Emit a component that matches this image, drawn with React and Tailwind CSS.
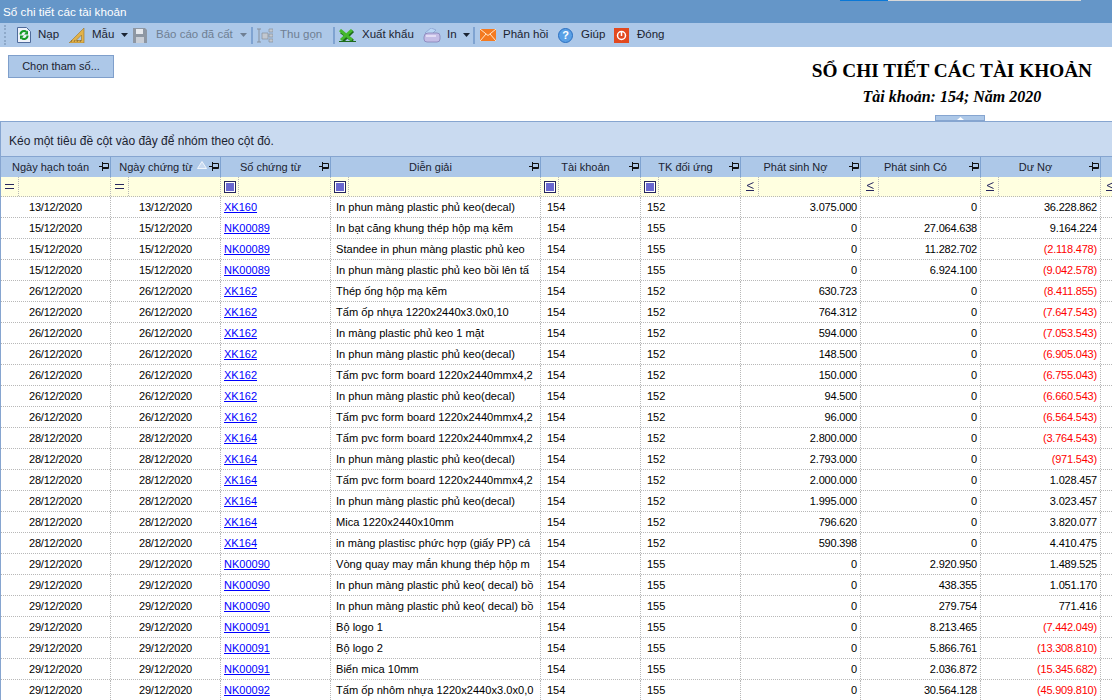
import React from "react";

const F = "font-['Liberation_Sans',Arial,sans-serif]";

const rows = [
  ["13/12/2020", "13/12/2020", "XK160", "In phun màng plastic phủ keo(decal)", "152", "3.075.000", "0", "36.228.862"],
  ["15/12/2020", "15/12/2020", "NK00089", "In bạt căng khung thép hộp mạ kẽm", "155", "0", "27.064.638", "9.164.224"],
  ["15/12/2020", "15/12/2020", "NK00089", "Standee in phun màng plastic phủ keo", "155", "0", "11.282.702", "(2.118.478)"],
  ["15/12/2020", "15/12/2020", "NK00089", "In phun màng plastic phủ keo bồi lên tấ", "155", "0", "6.924.100", "(9.042.578)"],
  ["26/12/2020", "26/12/2020", "XK162", "Thép ống hộp mạ kẽm", "152", "630.723", "0", "(8.411.855)"],
  ["26/12/2020", "26/12/2020", "XK162", "Tấm ốp nhựa 1220x2440x3.0x0,10", "152", "764.312", "0", "(7.647.543)"],
  ["26/12/2020", "26/12/2020", "XK162", "In màng plastic phủ keo 1 mặt", "152", "594.000", "0", "(7.053.543)"],
  ["26/12/2020", "26/12/2020", "XK162", "In phun màng plastic phủ keo(decal)", "152", "148.500", "0", "(6.905.043)"],
  ["26/12/2020", "26/12/2020", "XK162", "Tấm pvc form board 1220x2440mmx4,2", "152", "150.000", "0", "(6.755.043)"],
  ["26/12/2020", "26/12/2020", "XK162", "In phun màng plastic phủ keo(decal)", "152", "94.500", "0", "(6.660.543)"],
  ["26/12/2020", "26/12/2020", "XK162", "Tấm pvc form board 1220x2440mmx4,2", "152", "96.000", "0", "(6.564.543)"],
  ["28/12/2020", "28/12/2020", "XK164", "Tấm pvc form board 1220x2440mmx4,2", "152", "2.800.000", "0", "(3.764.543)"],
  ["28/12/2020", "28/12/2020", "XK164", "In phun màng plastic phủ keo(decal)", "152", "2.793.000", "0", "(971.543)"],
  ["28/12/2020", "28/12/2020", "XK164", "Tấm pvc form board 1220x2440mmx4,2", "152", "2.000.000", "0", "1.028.457"],
  ["28/12/2020", "28/12/2020", "XK164", "In phun màng plastic phủ keo(decal)", "152", "1.995.000", "0", "3.023.457"],
  ["28/12/2020", "28/12/2020", "XK164", "Mica 1220x2440x10mm", "152", "796.620", "0", "3.820.077"],
  ["28/12/2020", "28/12/2020", "XK164", "in màng plastisc phức hợp (giấy PP) cá", "152", "590.398", "0", "4.410.475"],
  ["29/12/2020", "29/12/2020", "NK00090", "Vòng quay may mắn khung thép hộp m", "155", "0", "2.920.950", "1.489.525"],
  ["29/12/2020", "29/12/2020", "NK00090", "In phun màng plastic phủ keo( decal) bồ", "155", "0", "438.355", "1.051.170"],
  ["29/12/2020", "29/12/2020", "NK00090", "In phun màng plastic phủ keo( decal) bồ", "155", "0", "279.754", "771.416"],
  ["29/12/2020", "29/12/2020", "NK00091", "Bộ logo 1", "155", "0", "8.213.465", "(7.442.049)"],
  ["29/12/2020", "29/12/2020", "NK00091", "Bộ logo 2", "155", "0", "5.866.761", "(13.308.810)"],
  ["29/12/2020", "29/12/2020", "NK00091", "Biển mica 10mm", "155", "0", "2.036.872", "(15.345.682)"],
  ["29/12/2020", "29/12/2020", "NK00092", "Tấm ốp nhôm nhựa 1220x2440x3.0x0,0", "155", "0", "30.564.128", "(45.909.810)"],
];

const Caret = ({ muted }) => (
  <svg width="7" height="4" viewBox="0 0 7 4" className="shrink-0">
    <path d="M0 0h7L3.500 4z" fill={muted ? "#6f7f93" : "#1a2433"} />
  </svg>
);

const Sep = () => <div className="h-[17px] w-[2px] shrink-0 bg-[#7fa3d1]" />;

const PinIcon = () => (
  <svg width="11" height="9" viewBox="0 0 11 9" className="shrink-0">
    <path d="M0 4.500h3M3.500 0v9M3.500 1.500h6v5h-6" fill="none" stroke="#111" strokeWidth="1" />
    <path d="M4 5.500h6" stroke="#111" strokeWidth="1" />
  </svg>
);

const Header = ({ w, title, extra, pad = "pr-[10px]" }) => (
  <div className={`relative flex h-full shrink-0 items-center justify-center border-r border-[#7fa3d1] ${w} ${pad}`}>
    <span className="text-[11px] text-[#1b2330]">{title}</span>
    {extra}
    <span className="absolute right-[0px] top-[5px]"><PinIcon /></span>
  </div>
);

const FilterSquare = () => (
  <div className="flex h-[12px] w-[12px] items-center justify-center border border-[#26265e] bg-white">
    <div className="h-[8px] w-[8px] bg-[#6a67cf]" />
  </div>
);

const FilterEq = () => (
  <svg width="9" height="5" viewBox="0 0 9 5"><path d="M0 .5h9M0 4.500h9" stroke="#26265e" strokeWidth="1" /></svg>
);

const FilterLe = () => (
  <svg width="8" height="9" viewBox="0 0 8 9"><path d="M7.500 .5L1 3.500l6.500 3M0 8.500h8" fill="none" stroke="#26265e" strokeWidth="1" /></svg>
);

const Filter = ({ w, icon }) => (
  <div className={`flex h-full shrink-0 border-r border-dotted border-[#b8b8b8] ${w}`}>
    <div className="flex h-full w-[18px] shrink-0 items-center justify-center border-r border-dotted border-[#b8b8b8]">{icon}</div>
  </div>
);

const Cell = ({ w, className = "", children }) => (
  <div className={`flex h-full shrink-0 items-center overflow-hidden whitespace-nowrap border-r border-dotted border-[#b8b8b8] pt-[1px] ${w} ${className}`}>
    {children}
  </div>
);

export default function App() {
  return (
    <div className={`relative flex h-[700px] w-[1112px] flex-col overflow-hidden bg-white text-[12px] text-black ${F}`}>
      {/* window bar */}
      <div className="relative flex h-[23px] shrink-0 items-center bg-[#6596c8] pl-[3px] text-[11.700px] text-white">
        Sổ chi tiết các tài khoản
        <div className="absolute left-[840px] top-0 flex h-[1px]">
          <div className="w-[48px] bg-[#0a78d7]" />
          <div className="w-[193px] bg-[#d8d8d8]" />
        </div>
      </div>

      {/* toolbar */}
      <div className="flex h-[24px] shrink-0 items-center whitespace-nowrap bg-[#adc8e8] text-[11.500px] text-[#1b2330]">
        <div className="ml-[4px] h-[20px] w-[3px] border-l-2 border-dotted border-[#8ea9c9]" />
        <svg width="14" height="16" viewBox="0 0 14 16" className="ml-[10px] shrink-0">
          <path d="M.5.5h9l4 4v11H.5z" fill="#eef2fa" stroke="#4f6a9a" />
          <path d="M3.500 7.500a3.500 3.500 0 0 1 6-2.500" fill="none" stroke="#159a24" strokeWidth="2" />
          <path d="M10.500 8.500a3.500 3.500 0 0 1-6 2.500" fill="none" stroke="#159a24" strokeWidth="2" />
          <path d="M11 3.500V7.500H7zM3 12.500V8.500h4z" fill="#159a24" />
        </svg>
        <span className="ml-[7px] w-[22px]">Nạp</span>
        <svg width="16" height="15" viewBox="0 0 16 15" className="ml-[9px] shrink-0">
          <path d="M15 0v15H0zM12.500 7L7 12.500h5.500z" fill="#e2b24a" fillRule="evenodd" stroke="#9b7426" strokeWidth=".6" />
          <path d="M2 14l1-2M5 14l1-2M8 14l1-2M11 14l1-2" stroke="#7a5a18" strokeWidth=".7" />
        </svg>
        <span className="ml-[7px] w-[23px]">Mẫu</span>
        <span className="ml-[6px]"><Caret /></span>
        <svg width="14" height="15" viewBox="0 0 14 15" className="ml-[5px] shrink-0">
          <path d="M0 0h12l2 2v13H0z" fill="#8e97a3" />
          <path d="M3 1h7v5H3z" fill="#e6e9ee" />
          <path d="M3 9h8v6H3z" fill="#c9ced6" />
        </svg>
        <span className="ml-[9px] w-[77px] text-[#6f7f93]">Báo cáo đã cất</span>
        <span className="ml-[7px]"><Caret muted /></span>
        <div className="ml-[4px]"><Sep /></div>
        <svg width="16" height="15" viewBox="0 0 16 15" className="ml-[4px] shrink-0">
          <path d="M0 1h4M2 1v13M0 14h4" stroke="#87909c" fill="none" />
          <path d="M5 5h6v6H5zM12 1h4v3h-4zM12 6h4v3h-4zM12 11h4v3h-4z" fill="#c2c8d0" stroke="#87909c" strokeWidth=".7" />
        </svg>
        <span className="ml-[7px] w-[44px] text-[#6f7f93]">Thu gọn</span>
        <div className="ml-[9px]"><Sep /></div>
        <svg width="17" height="13" viewBox="0 0 17 13" className="ml-[4px] shrink-0">
          <path d="M2 3l12 9M14 2L4 12" stroke="#1c6a1c" strokeWidth="3" fill="none" />
          <path d="M1 1l12 10M13 1L2 11" stroke="#45b82e" strokeWidth="3" fill="none" />
          <path d="M0 12.500h17" stroke="#1c6a1c" strokeWidth="1" />
        </svg>
        <span className="ml-[6px] w-[52px]">Xuất khẩu</span>
        <svg width="18" height="15" viewBox="0 0 18 15" className="ml-[9px] shrink-0">
          <path d="M2 5L8 0l5 2-5 5z" fill="#b9d6f5" stroke="#7f93c8" strokeWidth=".6" />
          <path d="M1 9q0-4 4-4h9q3 0 3 3v3q0 3-3 3H4q-3 0-3-3z" fill="#c4bde6" stroke="#8078b0" strokeWidth=".7" />
          <path d="M3 8h10" stroke="#ece9fa" strokeWidth="1.500" />
        </svg>
        <span className="ml-[6px] w-[10px]">In</span>
        <span className="ml-[6px]"><Caret /></span>
        <div className="ml-[3px]"><Sep /></div>
        <svg width="16" height="12" viewBox="0 0 16 12" className="ml-[5px] shrink-0">
          <path d="M0 0h16v12H0z" fill="#f47a20" />
          <path d="M0 0l8 6.500L16 0M0 12l6-7M16 12l-6-7" fill="none" stroke="#ffe6c8" strokeWidth="1" />
        </svg>
        <span className="ml-[7px] w-[47px]">Phản hồi</span>
        <div className="ml-[8px] flex h-[15px] w-[15px] shrink-0 items-center justify-center rounded-full border border-[#2a6fc0] bg-[#5aa0e6] text-[11px] font-bold text-white">?</div>
        <span className="ml-[8px] w-[25px]">Giúp</span>
        <svg width="15" height="15" viewBox="0 0 15 15" className="ml-[8px] shrink-0">
          <path d="M0 0h15v15H0z" fill="#e2491f" />
          <circle cx="7.500" cy="7.500" r="4" fill="none" stroke="#fff" strokeWidth="1.500" />
          <path d="M7.500 3v5" stroke="#fff" strokeWidth="1.500" />
        </svg>
        <span className="ml-[8px]">Đóng</span>
      </div>

      {/* report heading */}
      <div className="relative flex h-[74px] shrink-0 justify-between">
        <button className="ml-[8px] mt-[8px] h-[23px] w-[106px] border border-[#7f9fcb] bg-[#adc8e8] text-[11px] text-[#1b2330]">
          Chọn tham số...
        </button>
        <div className="mr-[20px] mt-[13px] flex flex-col items-center font-['Liberation_Serif',serif] font-bold text-black">
          <div className="text-[19.300px] leading-[22px]">SỔ CHI TIẾT CÁC TÀI KHOẢN</div>
          <div className="mt-[5px] text-[16px] italic leading-[20px]">Tài khoản: 154; Năm 2020</div>
        </div>
        <div className="absolute bottom-0 left-[935px] flex h-[6px] w-[50px] items-center justify-center border border-[#86a5d0] bg-[#adc8e8]">
          <svg width="7" height="3" viewBox="0 0 7 3"><path d="M0 3L3.500 0 7 3z" fill="#fff" /></svg>
        </div>
      </div>

      {/* grid */}
      <div className="flex min-h-0 flex-1 flex-col border-l border-[#86a5d0]">
        <div className="flex h-[36px] shrink-0 items-center border-y border-[#86a5d0] bg-[#c9daf0] pl-[8px] pt-[3px] text-[12px] text-[#1b2330]">
          Kéo một tiêu đề cột vào đây để nhóm theo cột đó.
        </div>
        <div className="flex h-[20px] shrink-0 bg-[#adc8e8]">
          <Header w="w-[110px]" title="Ngày hạch toán" />
          <Header
            w="w-[110px]"
            title="Ngày chứng từ"
            pad="pr-[19px]"
            extra={
              <svg width="10" height="8" viewBox="0 0 10 8" className="absolute right-[13px] top-[4px]">
                <path d="M5 .5L9.500 7.500H.5z" fill="#c9daf0" stroke="#fff" strokeWidth=".8" />
              </svg>
            }
          />
          <Header w="w-[110px]" title="Số chứng từ" />
          <Header w="w-[210px]" title="Diễn giải" />
          <Header w="w-[100px]" title="Tài khoản" />
          <Header w="w-[100px]" title="TK đối ứng" />
          <Header w="w-[120px]" title="Phát sinh Nợ" />
          <Header w="w-[120px]" title="Phát sinh Có" />
          <Header w="w-[120px]" title="Dư Nợ" />
        </div>
        <div className="flex h-[20px] shrink-0 border-b border-dotted border-[#b8b8b8] bg-[#ffffe0]">
          <Filter w="w-[110px]" icon={<FilterEq />} />
          <Filter w="w-[110px]" icon={<FilterEq />} />
          <Filter w="w-[110px]" icon={<FilterSquare />} />
          <Filter w="w-[210px]" icon={<FilterSquare />} />
          <Filter w="w-[100px]" icon={<FilterSquare />} />
          <Filter w="w-[100px]" icon={<FilterSquare />} />
          <Filter w="w-[120px]" icon={<FilterLe />} />
          <Filter w="w-[120px]" icon={<FilterLe />} />
          <Filter w="w-[120px]" icon={<FilterLe />} />
          <div className="flex h-full items-center pl-[5px]"><FilterLe /></div>
        </div>
        {rows.map((r, i) => (
          <div key={i} className="flex h-[21px] shrink-0 border-b border-dotted border-[#b8b8b8] text-[11px] text-[#000]">
            <Cell w="w-[110px] justify-center tracking-[-0.2px]">{r[0]}</Cell>
            <Cell w="w-[110px] justify-center tracking-[-0.2px]">{r[1]}</Cell>
            <Cell w="w-[110px] pl-[3px]"><a className="text-[#0000ff] underline">{r[2]}</a></Cell>
            <Cell w="w-[210px] pl-[5px] text-[11.100px]">{r[3]}</Cell>
            <Cell w="w-[100px] pl-[6px]">154</Cell>
            <Cell w="w-[100px] pl-[6px]">{r[4]}</Cell>
            <Cell w="w-[120px] justify-end pr-[3px] tracking-[-0.2px]">{r[5]}</Cell>
            <Cell w="w-[120px] justify-end pr-[3px] tracking-[-0.2px]">{r[6]}</Cell>
            <Cell w="w-[120px] justify-end pr-[3px] tracking-[-0.2px]" className={r[7].startsWith("(") ? "text-[#ff0000]" : ""}>{r[7]}</Cell>
          </div>
        ))}
      </div>
    </div>
  );
}
